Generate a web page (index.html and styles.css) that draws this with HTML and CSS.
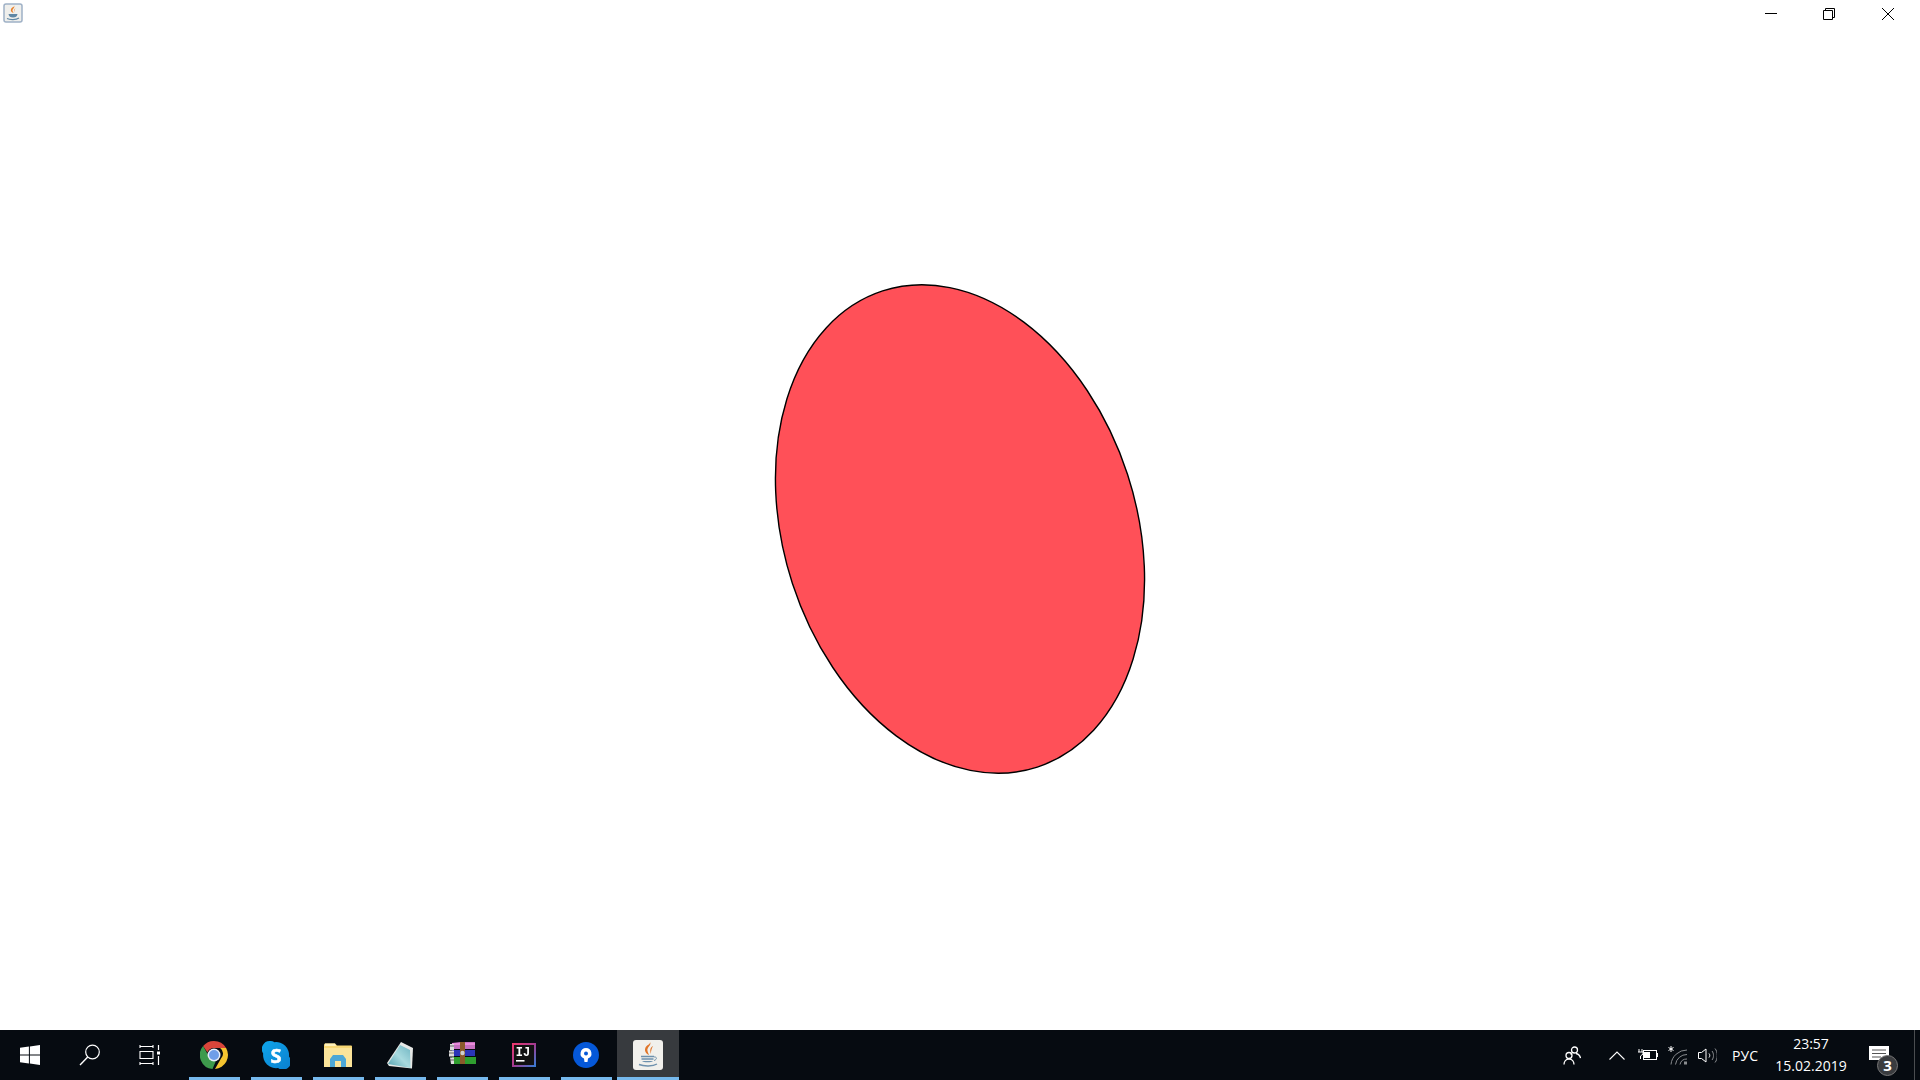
FILE: index.html
```html
<!DOCTYPE html>
<html lang="ru">
<head>
<meta charset="utf-8">
<title>Java</title>
<link rel="stylesheet" href="styles.css">
</head>
<body>
<div class="window">
  <header class="titlebar">
    <svg class="title-icon" viewBox="0 0 20 20">
      <rect x="1" y="1" width="18" height="18" rx="2" fill="#efefec" stroke="#9fb1c6" stroke-width="1.500"/>
      <path d="M11 2.500c1.500 2.500-2.500 3.500-1.200 6 .3.700.8 1.500.8 1.500-2.500-1-3.500-2.500-2.300-4.500C9.500 4 11.500 4 11 2.500z" fill="#e8802a"/>
      <path d="M12.500 5c-1.300 1.200-2 2.300-1 4.500-.6-2.200.4-3 1-4.500z" fill="#e8802a"/>
      <path d="M5.500 11h9c-.2 2.500-2 3.500-4.500 3.500S5.700 13.500 5.500 11z" fill="#5f87a5"/>
      <path d="M4 15.500c3 1.500 9 1.500 12-.5" fill="none" stroke="#5f87a5" stroke-width="1.200"/>
    </svg>
    <div class="controls">
      <div class="control"><svg width="12" height="12" viewBox="0 0 12 12"><path d="M0 5.500h12" stroke="#000" stroke-width="1"/></svg></div>
      <div class="control"><svg width="12" height="12" viewBox="0 0 12 12"><path d="M.5 2.500h9v9h-9zM2.500 2.500v-2h9v9h-2" fill="none" stroke="#000"/></svg></div>
      <div class="control"><svg width="12" height="12" viewBox="0 0 12 12"><path d="M0 0l12 12M12 0L0 12" stroke="#000" stroke-width="1"/></svg></div>
    </div>
  </header>

  <main class="canvas">
    <svg class="canvas-art" viewBox="0 0 1920 1000">
      <ellipse cx="960" cy="499" rx="176.200" ry="250.300" transform="rotate(-18 960 499)" fill="#ff5058" stroke="#000" stroke-width="1.400"/>
    </svg>
  </main>

  <footer class="taskbar">
    <div class="sys-btn">
      <svg width="20" height="20" viewBox="0 0 20 20"><path d="M0 2.800l8.900-1.200v7.900H0zM9.900 1.400L20 0v9.500H9.900zM0 10.500h8.900v7.900L0 17.200zM9.900 10.500H20V20L9.900 18.600z" fill="#fff"/></svg>
    </div>
    <div class="sys-btn">
      <svg width="22" height="22" viewBox="0 0 22 22"><circle cx="13.500" cy="8" r="6.800" fill="none" stroke="#fff" stroke-width="1.200"/><path d="M8.700 13L1 21" stroke="#fff" stroke-width="1.400"/></svg>
    </div>
    <div class="sys-btn">
      <svg width="22" height="20" viewBox="0 0 22 20"><path d="M1 0v3M14 0v3M1 1.500h13M1 6.500h13v7H1zM1 18.500h13M1 17v3M14 17v3M1 6v8M14 6v8" fill="none" stroke="#fff" stroke-width="1.100"/><path d="M19.500 0v5M19.500 11v9" stroke="#fff" stroke-width="1.200"/><rect x="18" y="6.500" width="3" height="3" fill="#fff"/></svg>
    </div>

    <div class="apps">
      <div class="app">
        <svg class="icon" width="28" height="28" viewBox="0 0 28 28">
          <path d="M14 0a14 14 0 0 1 12.100 7H14a7 7 0 0 0-6.600 4.600L3.100 5.100A14 14 0 0 1 14 0z" fill="#d9453a"/>
          <path d="M26.100 7A14 14 0 0 1 15 28l6-10.400a7 7 0 0 0-.9-10.600z" fill="#f4c430"/>
          <path d="M3.100 5.100l6.400 11.400a7 7 0 0 0 6.300 3.800L12.500 28A14 14 0 0 1 3.100 5.100z" fill="#3d9a4c"/>
          <circle cx="14" cy="14" r="6.500" fill="#e8eef8"/>
          <circle cx="14" cy="14" r="5" fill="#6f9ee8"/>
        </svg>
      </div>
      <div class="app">
        <svg class="icon" width="28" height="28" viewBox="0 0 28 28">
          <defs><linearGradient id="skg" x1="0" y1="0" x2="1" y2="1"><stop offset="0" stop-color="#0fa6ea"/><stop offset="1" stop-color="#0a7fd0"/></linearGradient></defs>
          <path d="M8 0a8 8 0 0 1 4.500 1.200A13 13 0 0 1 27 15.500 8 8 0 0 1 16 27 13 13 0 0 1 1.200 12.500 8 8 0 0 1 8 0z" fill="url(#skg)"/>
          <text x="14" y="21.500" class="skype-s">S</text>
        </svg>
      </div>
      <div class="app">
        <svg class="icon" width="28" height="26" viewBox="0 0 28 26">
          <path d="M0 3a2 2 0 0 1 1-1.500h10l2 2h14a1 1 0 0 1 1 1V25H0z" fill="#f7d774"/>
          <path d="M1 1.500h10l1 2.500H1z" fill="#fdf0bc"/>
          <path d="M0 6h28v19H0z" fill="#fbe49a"/>
          <path d="M6 25v-8l3-4h10l3 4v8h-5v-6h-6v6z" fill="#4ca7d6"/>
        </svg>
      </div>
      <div class="app">
        <svg class="icon" width="27" height="27" viewBox="0 0 27 27">
          <defs><linearGradient id="ntg" x1="0" y1="1" x2="1" y2="0"><stop offset="0" stop-color="#4f9fae"/><stop offset=".5" stop-color="#a8dadf"/><stop offset="1" stop-color="#6fb5c2"/></linearGradient></defs>
          <path d="M14 0l12 6-1 20.500L2 24 0 21z" fill="#e6e8e6"/>
          <path d="M13 3l10 5 .5 18L1 22z" fill="url(#ntg)"/>
        </svg>
      </div>
      <div class="app">
        <svg class="icon rar" width="27" height="22" viewBox="0 0 27 22">
          <path d="M3 1l8-1h15v7H3z" fill="#c56fc0"/>
          <path d="M3 1h23v2H3z" fill="#e78bd8"/>
          <path d="M3 8h23v6H3z" fill="#2a35b8"/>
          <path d="M3 15h24v7H3z" fill="#2f9e2f"/>
          <path d="M1 2h4v6H1zM0 8.500h5v6H0zM1 15.500h4V22H2z" fill="#dcdcdc"/>
          <path d="M1 4h4M0 11h5M1 18h4" stroke="#444" stroke-width=".8"/>
          <path d="M11 0h5v22h-5z" fill="#8a5a2b"/>
          <circle cx="13.500" cy="11" r="2.200" fill="#cfcfcf"/>
        </svg>
      </div>
      <div class="app">
        <svg class="icon" width="24" height="24" viewBox="0 0 24 24">
          <defs><linearGradient id="ijg" x1="0" y1="0" x2="1" y2="1"><stop offset="0" stop-color="#f0386b"/><stop offset=".5" stop-color="#a33a90"/><stop offset="1" stop-color="#2f80d8"/></linearGradient></defs>
          <rect width="24" height="24" fill="url(#ijg)"/>
          <rect x="2" y="2" width="20" height="20" fill="#111"/>
          <text x="11" y="13" class="ij-text">IJ</text>
          <rect x="4" y="17" width="8.500" height="1.600" fill="#fff"/>
        </svg>
      </div>
      <div class="app">
        <svg class="icon" width="26" height="26" viewBox="0 0 26 26">
          <circle cx="13" cy="13" r="13" fill="#0558d8"/>
          <path d="M13 6a5.500 5.500 0 0 1 2 10.600L14.500 20h-3l-.500-3.400A5.500 5.500 0 0 1 13 6z" fill="#fff"/>
          <circle cx="13" cy="11.500" r="2" fill="#0558d8"/>
        </svg>
      </div>
      <div class="app app-active">
        <svg class="icon" width="30" height="30" viewBox="0 0 30 30">
          <rect width="30" height="30" rx="3" fill="#f1f0ec"/>
          <path d="M17 2c2 3.500-3.500 5-2.500 9 .4 1.500 1.500 4 1.500 4-3-1.500-5-4-3.500-7.500C13.500 5 17.500 4.500 17 2z" fill="#e0752a"/>
          <path d="M20 6c-2.500 1.500-3.500 3.500-2 8-.2-3.500.8-5.500 2-8z" fill="#e0752a"/>
          <path d="M8 16.500h13M8.500 19h12" stroke="#6d90ad" stroke-width="1.300"/>
          <path d="M9 21h11c-1 1.800-10 1.800-11 0z" fill="#6d90ad"/>
          <path d="M21 17c3-.5 3.500 2.500 0 3.500" fill="none" stroke="#6d90ad"/>
          <path d="M6 24.500c5 2 14 2 18-.5" fill="none" stroke="#6d90ad" stroke-width="1.400"/>
        </svg>
      </div>
    </div>

    <div class="tray">
      <svg class="people" width="18" height="19" viewBox="0 0 18 19"><g fill="none" stroke="#fff" stroke-width="1.300"><circle cx="6" cy="9.500" r="3"/><path d="M1 18.500c0-3 2-5.500 5-5.500s5 2.500 5 5.500"/><circle cx="11.500" cy="4" r="3"/><path d="M9 7c-.7.400-1 .9-1.300 1.500M13 7.500c2.500.5 4 2.500 4.500 4.500"/></g></svg>
      <svg class="caret" width="16" height="9" viewBox="0 0 16 9"><path d="M.5 8.500L8 1l7.500 7.500" fill="none" stroke="#fff" stroke-width="1.100"/></svg>
      <svg class="battery" width="20" height="12" viewBox="0 0 20 12"><rect x="5.500" y="1.500" width="13" height="9" fill="none" stroke="#fff"/><rect x="6" y="3" width="6" height="6" fill="#fff"/><rect x="19" y="4" width="1" height="4" fill="#fff"/><path d="M1 0v3M4 0v3M0 3h5v2L2.500 7v3" fill="none" stroke="#fff"/></svg>
      <svg class="wifi" width="20" height="19" viewBox="0 0 20 19"><path d="M3 0v6M0.500 1.500l5 3M5.500 1.500l-5 3" stroke="#fff"/><g fill="none" stroke="#8a8d90"><path d="M3 18.500A16 16 0 0 1 19 4"/><path d="M7.500 18.500A11.500 11.500 0 0 1 19 8.500"/><path d="M12 18.500a7 7 0 0 1 7-5.500"/></g><rect x="16" y="15.500" width="3" height="3" fill="#8a8d90"/></svg>
      <svg class="sound" width="20" height="17" viewBox="0 0 20 17"><path d="M1.500 5.500h3L9 2v13L4.500 11.500h-3z" fill="none" stroke="#fff"/><path d="M12 6.500c1 1 1 3 0 4" fill="none" stroke="#fff"/><path d="M15 4c2 2.500 2 6.500 0 9M18 1.500c3 3.500 3 10.500 0 14" fill="none" stroke="#8a8d90"/></svg>
      <span class="lang">РУС</span>
      <div class="clock"><span>23:57</span><span>15.02.2019</span></div>
      <div class="notify">
        <svg width="20" height="18" viewBox="0 0 20 18"><path d="M0 0h20v14h-7l-3 4v-4H0z" fill="#fff"/><path d="M3 4h14M3 7.500h14M3 11h9" stroke="#555" stroke-width="1"/></svg>
        <span class="badge">3</span>
      </div>
      <div class="show-desktop"></div>
    </div>
  </footer>
</div>
</body>
</html>
```

FILE: styles.css
```css
html, body {
  margin: 0;
  height: 100%;
  background: #fff;
  overflow: hidden;
}

.window {
  display: flex;
  flex-direction: column;
  height: 100vh;
}

.titlebar {
  flex: 0 0 30px;
  display: flex;
  align-items: flex-start;
  justify-content: space-between;
  padding-left: 3px;
}

.title-icon {
  width: 20px;
  height: 20px;
  margin-top: 3px;
  filter: blur(.4px);
}

.controls {
  display: flex;
  padding-right: 3px;
}

.control {
  width: 58.5px;
  height: 27px;
  display: flex;
  align-items: center;
  justify-content: center;
}

.canvas {
  flex: 1;
  min-height: 0;
}

.canvas-art {
  display: block;
  width: 100%;
  height: 100%;
}

.taskbar {
  flex: 0 0 50px;
  display: flex;
  align-items: stretch;
  background: #060b11;
  color: #fff;
  font-family: "Open Sans", "Noto Sans", sans-serif;
}

.sys-btn {
  width: 60px;
  display: flex;
  align-items: center;
  justify-content: center;
}

.apps {
  display: flex;
  margin-left: 4px;
}

.app {
  position: relative;
  box-sizing: border-box;
  width: 62px;
  padding-right: 2px;
  display: flex;
  align-items: center;
  justify-content: center;
}

.app::after {
  content: "";
  position: absolute;
  left: 5px;
  right: 6px;
  bottom: 0;
  height: 3px;
  background: #76b9ed;
}

.app-active {
  background: #373a3e;
  margin-left: -1px;
  padding-right: 0;
}

.app-active::after {
  left: 0;
  right: 0;
}

.icon {
  filter: blur(.35px);
}

.rar {
  margin-bottom: 4px;
}

.skype-s {
  font: 700 20px "Open Sans", sans-serif;
  fill: #fff;
  stroke: #fff;
  stroke-width: .5px;
  text-anchor: middle;
}

.ij-text {
  font: 700 12px "Liberation Mono", monospace;
  fill: #fff;
  text-anchor: middle;
}

.tray {
  margin-left: auto;
  display: flex;
  align-items: center;
}

.people {
  margin-right: 28px;
}

.caret {
  margin-right: 13px;
}

.battery {
  margin-right: 10px;
}

.wifi {
  margin-right: 9px;
}

.sound {
  margin-right: 15px;
}

.lang {
  font-size: 14px;
  margin-right: 16px;
}

.clock {
  width: 74px;
  display: flex;
  flex-direction: column;
  align-items: center;
  gap: 4px;
  font-size: 14px;
  line-height: 18px;
  margin-right: 21px;
}

.notify {
  position: relative;
  width: 24px;
  height: 36px;
  margin-right: 21px;
  display: flex;
  align-items: center;
}

.badge {
  position: absolute;
  right: -5px;
  bottom: -3px;
  width: 21px;
  height: 21px;
  border-radius: 50%;
  background: #3a3c3f;
  border: 1px solid #777;
  box-sizing: border-box;
  font-size: 15px;
  font-weight: 700;
  line-height: 19px;
  text-align: center;
}

.show-desktop {
  width: 6px;
  box-sizing: border-box;
  border-left: 1px solid #4a4d50;
  align-self: stretch;
}
```
